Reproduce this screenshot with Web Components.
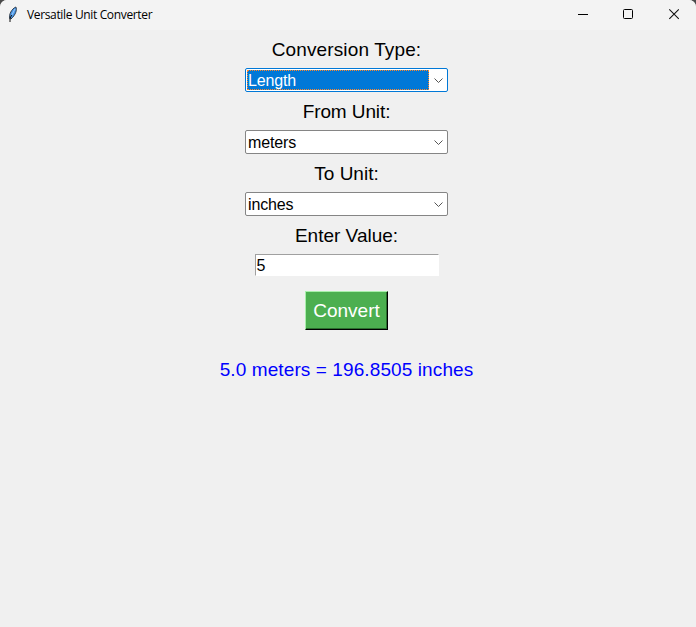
<!DOCTYPE html>
<html lang="en">
<head>
<meta charset="utf-8">
<title>Versatile Unit Converter</title>
<style>
html,body{margin:0;height:100%;overflow:hidden;background:#4a4a4a}
body{font-family:"Liberation Sans",Arial,sans-serif;color:#000}
</style>
</head>
<body>
<app-window>
  <title-bar slot="bar">Versatile Unit Converter</title-bar>
  <field-label style="--ls:.12px">Conversion Type:</field-label>
  <combo-box focused>Length</combo-box>
  <field-label style="--ls:-.1px">From Unit:</field-label>
  <combo-box>meters</combo-box>
  <field-label>To Unit:</field-label>
  <combo-box>inches</combo-box>
  <field-label>Enter Value:</field-label>
  <value-entry>5</value-entry>
  <push-button>Convert</push-button>
  <result-text>5.0 meters = 196.8505 inches</result-text>
</app-window>
<script>
function define(name, html) {
  customElements.define(name, class extends HTMLElement {
    constructor() {
      super();
      this.attachShadow({mode: 'open'}).innerHTML = html;
    }
  });
}
define('app-window', `<style>
:host{display:flex;flex-direction:column;width:696px;height:627px;background:#f0f0f0;border-radius:7px 7px 0 0;overflow:hidden}
main{display:flex;flex-direction:column;align-items:center;padding-right:3px}
</style><slot name="bar"></slot><main><slot></slot></main>`);
define('title-bar', `<style>
:host{display:flex;height:30px;flex:none;background:#f3f3f3;align-items:center;font:12px/16px "Open Sans","Noto Sans",sans-serif;padding-left:7px;box-sizing:border-box}
.name{margin-left:6px;flex:1;letter-spacing:-.35px;white-space:nowrap}
.controls{display:flex}
svg{display:block}
</style>
<svg width="14" height="18" viewBox="0 0 14 18"><path d="M2.7 12.5C1.8 8.5 4.5 3 8.8 1C10.4 3.5 8.6 9 4 13Z" fill="#4a97e8" stroke="#222c38" stroke-width=".9"/><path d="M7.9 3L5 8.8" stroke="#a4d0fb" stroke-width=".9"/><path d="M4.6 9L3 12.5V16" fill="none" stroke="#111" stroke-width="1"/></svg>
<span class="name"><slot></slot></span>
<div class="controls">
<svg width="45" height="30" viewBox="0 0 45 30"><path d="M18 14.5h10" stroke="#000"/></svg>
<svg width="46" height="30" viewBox="0 0 46 30"><rect x="18.5" y="9.5" width="9" height="9" rx="1" fill="none" stroke="#000"/></svg>
<svg width="45" height="30" viewBox="0 0 45 30"><path d="M18.3 9.3l9.5 9.5m0-9.5l-9.5 9.5" fill="none" stroke="#111" stroke-width="1.1"/></svg>
</div>`);
define('field-label', `<style>
:host{display:block;height:38px;font-size:19px;line-height:39px;white-space:nowrap;letter-spacing:var(--ls,0)}
</style><slot></slot>`);
define('combo-box', `<style>
:host{display:flex;box-sizing:border-box;width:203px;height:24px;background:#fff;border:1px solid #858585;border-radius:2px;font-size:16px;line-height:21px;padding:1px}
.value{box-sizing:border-box;width:182px;height:20px;padding-left:1px;white-space:nowrap;letter-spacing:-.15px}
:host([focused]){border-color:#0078d7}
:host([focused]) .value{background:#0078d7;color:#fff;outline:1px dotted #ff8728;outline-offset:-1px}
svg{display:block;margin-left:4px}
</style><div class="value"><slot></slot></div><svg width="12" height="20" viewBox="0 0 12 20"><path d="M1.5 8.5l4 4 4-4" fill="none" stroke="#555"/></svg>`);
define('value-entry', `<style>
:host{display:block;box-sizing:border-box;width:184px;height:22px;background:#fff;border:solid #fff;border-width:1px;border-top-color:#a0a0a0;border-left-color:#a0a0a0;font-size:16px;line-height:21px;padding-left:1px}
</style><slot></slot>`);
define('push-button', `<style>
:host{display:block;box-sizing:border-box;width:83px;height:39px;margin-top:15px;background:#4caf50;color:#fff;border:1px solid #000;border-top-color:#a8f0ab;border-left-color:#a8f0ab;box-shadow:inset -1px -1px #2b6e2e;font-size:19px;line-height:38px;text-align:center}
</style><slot></slot>`);
define('result-text', `<style>
:host{display:block;margin-top:29px;font-size:19px;line-height:22px;letter-spacing:.1px;color:#00f;white-space:nowrap}
</style><slot></slot>`);
</script>
</body>
</html>
